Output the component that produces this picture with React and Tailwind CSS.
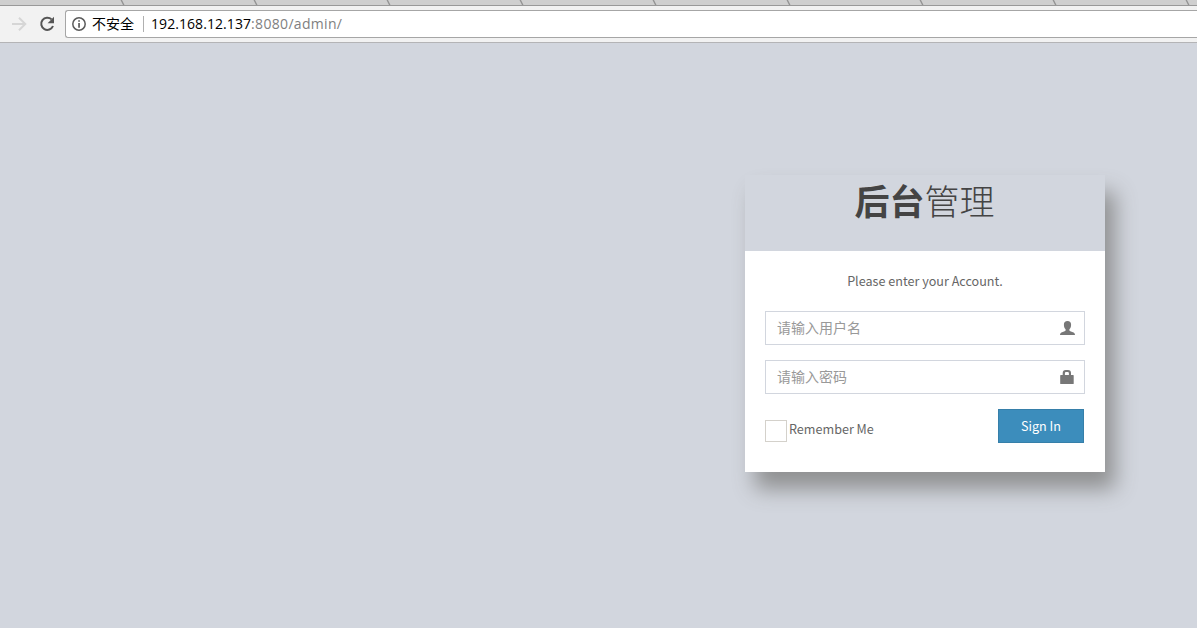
const tabEdges = Array.from({ length: 9 }, (_, i) => 121 + Math.round(i * 133.1));

function TabStrip() {
  return (
    <div className="h-[6px] shrink-0 border-b border-[#999999] bg-[#cfcfcf]">
      <svg width="1197" height="5" className="block">
        {tabEdges.map((x) => (
          <path key={x} d={`M${x} -0.5 L${x + 3} 5.5`} stroke="#939393" strokeWidth="1.3" fill="none" />
        ))}
      </svg>
    </div>
  );
}

function Toolbar() {
  return (
    <div className="flex h-[37px] shrink-0 items-start border-b border-[#b4b4b6] bg-[#f2f2f2] pt-[4px] pl-[11px]">
      <svg width="16" height="28" viewBox="0 0 16 28" className="shrink-0" fill="none" stroke="#d6d6d6" strokeWidth="2">
        <path d="M1 14H14M8 7.7L14.300 14L8 20.3" />
      </svg>
      <svg width="16" height="28" viewBox="0 0 16 28" className="ml-[12px] shrink-0">
        <path d="M12.6 9.4A6.1 6.1 0 1 0 14 16" fill="none" stroke="#555" strokeWidth="2" />
        <path d="M15 6.8V13.2H8.6Z" fill="#555" />
      </svg>
      <div className="ml-[10px] flex h-[28px] flex-1 items-center rounded-l-[3px] border border-r-0 border-[#a6a6a6] bg-white pl-[6px]">
        <svg width="14" height="14" viewBox="0 0 14 14" className="shrink-0">
          <circle cx="7" cy="7" r="6.2" fill="none" stroke="#5a5a5a" strokeWidth="1.5" />
          <path d="M6.2 3.2h1.7v1.6H6.2zM6.2 6h1.7v4.8H6.2z" fill="#5a5a5a" />
        </svg>
        <span className="mb-[2px] ml-[6px] font-['Noto_Sans_CJK_SC',sans-serif] text-[14px] leading-[24px] whitespace-nowrap text-black">不安全</span>
        <span className="ml-[9px] h-[16px] w-px bg-[#b0b0b0]" />
        <span className="ml-[7px] font-['Open_Sans','Noto_Sans',sans-serif] text-[14px] leading-[26px] whitespace-nowrap text-[#808080]">
          <span className="tracking-[0.07px] text-black">192.168.12.137</span>
          <span className="tracking-[0.32px]">:8080/admin/</span>
        </span>
      </div>
    </div>
  );
}

function UserIcon() {
  return (
    <svg width="15" height="14" viewBox="0 0 15 14" className="shrink-0" fill="#777">
      <path d="M7.500 0C5.200 0 3.900 1.300 3.900 3.700c0 2 .7 3.600 1.700 4.500v1.400C5.400 10.300 3 10.800 1.400 11.500.5 12 .1 12.600 0 14h15c-.1-1.400-.5-2-1.400-2.500C12 10.800 9.600 10.300 9.400 9.600V8.200c1-.9 1.700-2.500 1.700-4.500C11.100 1.300 9.800 0 7.500 0Z" />
    </svg>
  );
}

function LockIcon() {
  return (
    <svg width="15" height="14" viewBox="0 0 15 14" className="shrink-0" fill="#777">
      <path fillRule="evenodd" d="M2.700 5V3Q2.700 0 5.700 0H8Q11 0 11 3V5H13.100Q13.700 5 13.700 5.600V13.400Q13.700 14 13.100 14H.8Q.2 14 .2 13.400V5.600Q.2 5 .8 5ZM4.900 5H8.900V3.200Q8.900 2 7.800 2H6Q4.900 2 4.900 3.200Z" />
    </svg>
  );
}

function Field({ type, placeholder, children }) {
  return (
    <label className="mb-[15px] flex h-[34px] items-center border border-[#d2d6de] bg-white pr-[9px] pl-[11px]">
      <input
        type={type}
        placeholder={placeholder}
        className="h-[32px] min-w-0 flex-1 bg-transparent pb-[2px] text-[14px] outline-none placeholder:text-[#999]"
      />
      {children}
    </label>
  );
}

function LoginBox() {
  return (
    <div className="mt-[132px] ml-[745px] h-[297px] w-[360px] bg-[#d2d6de] font-['Noto_Sans_CJK_SC',sans-serif] shadow-[10px_17px_20px_#909192]">
      <h1 className="h-[76px] pr-px text-center text-[35px] leading-[50px] whitespace-nowrap text-[#444]">
        <b className="font-bold">后台</b>
        <span className="font-light">管理</span>
      </h1>
      <div className="h-[221px] bg-white px-[20px] pt-[20px] text-[#666]">
        <p className="mb-[20px] text-center text-[12.6px] leading-[20px]">Please enter your Account.</p>
        <Field type="text" placeholder="请输入用户名">
          <UserIcon />
        </Field>
        <Field type="password" placeholder="请输入密码">
          <LockIcon />
        </Field>
        <div className="flex items-start justify-between pr-px">
          <label className="mt-[10px] flex items-start">
            <span className="mt-px h-[22px] w-[22px] border border-[#d4d1cb] bg-white" />
            <span className="ml-[2px] text-[12.6px] leading-[20px]">Remember Me</span>
          </label>
          <button className="h-[34px] w-[86px] border border-[#367fa9] bg-[#3c8dbc] text-[12.6px] leading-[20px] text-white">
            Sign In
          </button>
        </div>
      </div>
    </div>
  );
}

export default function App() {
  return (
    <div className="flex h-[628px] w-[1197px] flex-col overflow-hidden bg-[#d2d6de]">
      <TabStrip />
      <Toolbar />
      <LoginBox />
    </div>
  );
}
